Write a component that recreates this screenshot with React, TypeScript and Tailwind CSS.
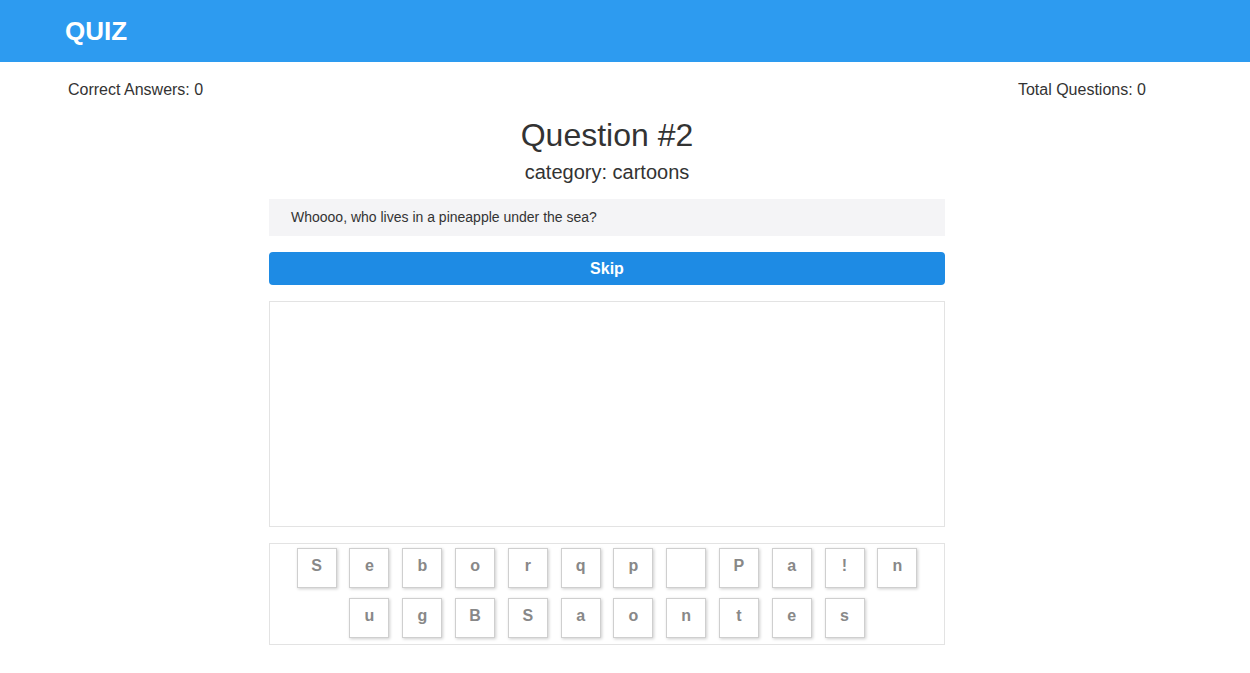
import React from "react";

const row = ["S","e","b","o","r","q","p"," ","P","a","!","n","u","g","B","S","a","o","n","t","e","s"];

export default function App() {
  return (
    <div className="min-h-screen bg-white text-[#333] font-['Liberation_Sans',Arial,sans-serif]">
      <header className="h-[62px] bg-[#2d9bf0] flex items-center">
        <div className="pl-[65px] text-white font-bold text-[26px] leading-none">QUIZ</div>
      </header>
      <div className="w-[1214px]">
        <div className="mx-auto w-[1078px] flex justify-between pt-[19px] text-[16px] leading-[18px]">
          <span>Correct Answers: 0</span>
          <span>Total Questions: 0</span>
        </div>
        <div className="mx-auto w-[676px] flex flex-col">
          <h1 className="text-center text-[32px] leading-[36px] mt-[18px]">Question #2</h1>
          <h2 className="text-center text-[20px] leading-[24px] mt-[7px]">category: cartoons</h2>
          <div className="mt-[15px] h-[37px] bg-[#f4f4f6] flex items-center pl-[22px] text-[14px]">
            Whoooo, who lives in a pineapple under the sea?
          </div>
          <button className="mt-[16px] h-[33px] rounded-[4px] bg-[#1e8be4] text-white font-bold text-[16px]">
            Skip
          </button>
          <div className="mt-[16px] h-[226px] border border-[#e3e3e3]"></div>
          <div className="mt-[16px] border border-[#e3e3e3] flex flex-wrap justify-center gap-y-[10px] pt-[4px] pb-[6px]">
            {row.map((c, i) => (
              <div
                key={i}
                className="w-[40px] h-[40px] mx-[6.4px] border border-[#cfcfcf] bg-white shadow-[1px_1px_3px_rgba(0,0,0,0.2)] flex items-center justify-center text-[#888] font-bold text-[16px] pb-[4px]"
              >
                {c}
              </div>
            ))}
          </div>
        </div>
      </div>
    </div>
  );
}
